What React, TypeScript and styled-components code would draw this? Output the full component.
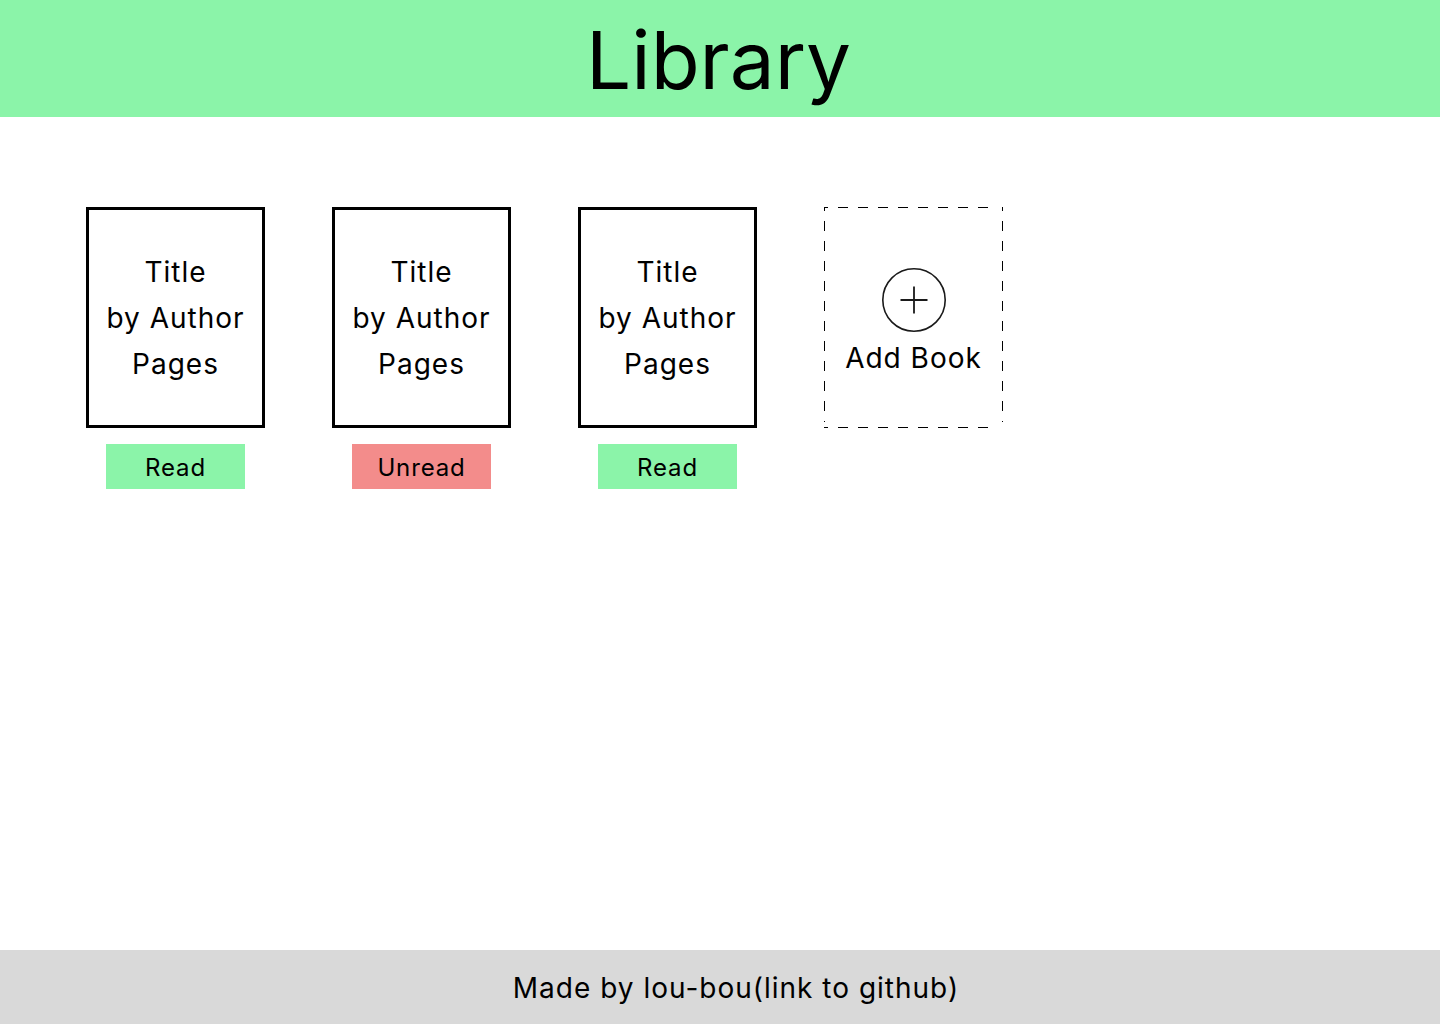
import React from "react";
import styled, { createGlobalStyle } from "styled-components";

const GlobalStyle = createGlobalStyle`
  * { box-sizing: border-box; }
  html, body { margin: 0; padding: 0; }
  body {
    font-family: Inter, "Noto Sans", sans-serif;
    color: #000;
    background: #fff;
  }
`;

const Page = styled.div`
  min-height: 100vh;
  display: flex;
  flex-direction: column;
`;

const Header = styled.header`
  height: 117px;
  background: #8bf4a9;
  display: flex;
  align-items: center;
  justify-content: center;
`;

const Title = styled.h1`
  margin: 0 3px 0 0;
  font-size: 80px;
  font-weight: 400;
  line-height: 1;
  transform: translateY(1px);
`;

const Main = styled.main`
  flex: 1;
  padding: 90px 86px 0;
  display: flex;
  align-items: flex-start;
  gap: 67px;
`;

const BookColumn = styled.div`
  display: flex;
  flex-direction: column;
  align-items: center;
  gap: 16px;
`;

const Card = styled.div`
  width: 179px;
  height: 221px;
  border: 3px solid #000;
  display: flex;
  flex-direction: column;
  align-items: center;
  justify-content: center;
`;

const CardLine = styled.p`
  margin: 0;
  font-size: 28px;
  line-height: 46px;
  letter-spacing: 1px;
  text-align: center;
  white-space: nowrap;
`;

const StatusButton = styled.button<{ $read: boolean }>`
  width: 139px;
  height: 45px;
  border: none;
  padding: 2px 0 0;
  background: ${(p) => (p.$read ? "#8bf4a9" : "#f38c8b")};
  font-family: Inter, "Noto Sans", sans-serif;
  font-size: 24px;
  letter-spacing: 0.85px;
  color: #000;
  cursor: pointer;
`;

const dash = "#000";
const AddCard = styled.button`
  width: 179px;
  height: 221px;
  border: none;
  padding: 61px 0 0;
  background-color: transparent;
  background-image:
    repeating-linear-gradient(90deg, ${dash} 0 10px, transparent 10px 20px),
    repeating-linear-gradient(90deg, ${dash} 0 10px, transparent 10px 20px),
    repeating-linear-gradient(180deg, ${dash} 0 10px, transparent 10px 20px),
    repeating-linear-gradient(180deg, ${dash} 0 10px, transparent 10px 20px);
  background-size: 100% 1px, 100% 1px, 1px 100%, 1px 100%;
  background-position: -6px 0, -6px 100%, 0 -6px, 100% -6px;
  background-repeat: no-repeat;
  display: flex;
  flex-direction: column;
  align-items: center;
  gap: 9px;
  font-family: Inter, "Noto Sans", sans-serif;
  cursor: pointer;
`;

const AddLabel = styled.span`
  font-size: 28px;
  line-height: 34px;
  letter-spacing: 1px;
  color: #000;
`;

const Footer = styled.footer`
  height: 74px;
  padding: 2px 0 0 32px;
  background: #d9d9d9;
  display: flex;
  align-items: center;
  justify-content: center;
  font-size: 28px;
  letter-spacing: 1px;
`;

const PlusCircle = () => (
  <svg width="64" height="64" viewBox="0 0 64 64" fill="none">
    <circle cx="32" cy="32" r="31.2" stroke="#1a1a1a" strokeWidth="1.6" />
    <path d="M18.5 32h27M32 18.5v27" stroke="#1a1a1a" strokeWidth="1.8" />
  </svg>
);

const books = [
  { read: true },
  { read: false },
  { read: true },
];

export default function App() {
  return (
    <Page>
      <GlobalStyle />
      <Header>
        <Title>Library</Title>
      </Header>
      <Main>
        {books.map((b, i) => (
          <BookColumn key={i}>
            <Card>
              <CardLine>Title</CardLine>
              <CardLine>by Author</CardLine>
              <CardLine>Pages</CardLine>
            </Card>
            <StatusButton $read={b.read}>{b.read ? "Read" : "Unread"}</StatusButton>
          </BookColumn>
        ))}
        <AddCard>
          <PlusCircle />
          <AddLabel>Add Book</AddLabel>
        </AddCard>
      </Main>
      <Footer>Made by lou-bou(link to github)</Footer>
    </Page>
  );
}
